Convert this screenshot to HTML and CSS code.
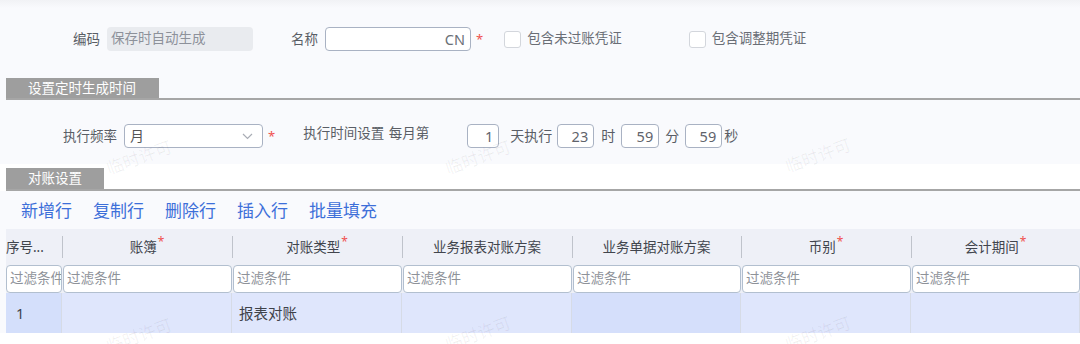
FILE: index.html
```html
<!DOCTYPE html>
<html lang="zh-CN">
<head>
<meta charset="utf-8">
<link rel="stylesheet" href="styles.css">
</head>
<body>
<div class="topband"></div>
<div class="row row1">
  <span class="lbl">编码</span>
  <div class="inp inp-disabled">保存时自动生成</div>
  <span class="lbl lbl-name">名称</span>
  <div class="inp inp-name">CN</div><span class="req">*</span>
  <div class="chk chk1"><span class="box"></span><span>包含未过账凭证</span></div>
  <div class="chk chk2"><span class="box"></span><span>包含调整期凭证</span></div>
</div>

<div class="sec sec1"><div class="tab tab1">设置定时生成时间</div></div>

<div class="row row2">
  <span class="lbl lbl-freq">执行频率</span>
  <div class="inp sel"><span>月</span>
    <svg class="chev" width="11" height="7" viewBox="0 0 11 7"><polyline points="1,1 5.5,5.5 10,1" fill="none" stroke="#a9adb5" stroke-width="1.2"/></svg>
  </div>
  <span class="req">*</span>
  <span class="lbl lbl-time">执行时间设置 每月第</span>
  <div class="inp num num-day">1</div>
  <span class="unit u-day">天执行</span>
  <div class="inp num num-h">23</div>
  <span class="unit u-h">时</span>
  <div class="inp num num-m">59</div>
  <span class="unit u-m">分</span>
  <div class="inp num num-s">59</div>
  <span class="unit u-s">秒</span>
</div>

<div class="sec2wrap"><div class="sec sec2"><div class="tab tab2">对账设置</div></div></div>

<div class="toolbar">
  <span class="act">新增行</span>
  <span class="act">复制行</span>
  <span class="act">删除行</span>
  <span class="act">插入行</span>
  <span class="act">批量填充</span>
</div>

<div class="grid">
  <div class="hd hd-first">序号...</div>
  <div class="hd">账簿<sup class="star">*</sup></div>
  <div class="hd">对账类型<sup class="star">*</sup></div>
  <div class="hd">业务报表对账方案</div>
  <div class="hd">业务单据对账方案</div>
  <div class="hd">币别<sup class="star">*</sup></div>
  <div class="hd">会计期间<sup class="star">*</sup></div>

  <div class="ft"><div class="fi">过滤条件</div></div>
  <div class="ft"><div class="fi">过滤条件</div></div>
  <div class="ft"><div class="fi">过滤条件</div></div>
  <div class="ft"><div class="fi">过滤条件</div></div>
  <div class="ft"><div class="fi">过滤条件</div></div>
  <div class="ft"><div class="fi">过滤条件</div></div>
  <div class="ft"><div class="fi">过滤条件</div></div>

  <div class="td td-idx">1</div>
  <div class="td"></div>
  <div class="td">报表对账</div>
  <div class="td"></div>
  <div class="td td-dark"></div>
  <div class="td"></div>
  <div class="td"></div>
</div>
<div class="tail"></div>

<span class="wm wm1">临时许可</span>
<span class="wm wm2">临时许可</span>
<span class="wm wm3">临时许可</span>
<span class="wm wm4">临时许可</span>
<span class="wm wm5">临时许可</span>
<span class="wm wm6">临时许可</span>
</body>
</html>
```

FILE: styles.css
```css
html, body {
  margin: 0;
  padding: 0;
}
body {
  width: 1080px;
  height: 344px;
  overflow: hidden;
  position: relative;
  background: #f9fafd;
  font-family: "Noto Sans", "Noto Sans CJK SC", sans-serif;
  font-size: 13.5px;
  color: #5a5e66;
  line-height: 1;
}
.topband {
  height: 8px;
  background: linear-gradient(#f1f2f5, #f9fafd);
}
.row {
  display: flex;
  align-items: center;
  height: 24px;
}
.row1 {
  margin-top: 19px;
  padding-left: 73px;
}
.lbl {
  white-space: nowrap;
  line-height: 18px;
}
.inp {
  box-sizing: border-box;
  height: 24px;
  border-radius: 4px;
  display: flex;
  align-items: center;
  white-space: nowrap;
}
.inp-disabled {
  margin-left: 7px;
  width: 146px;
  background: #e9ebef;
  color: #8d919a;
  padding-left: 4px;
}
.lbl-name {
  margin-left: 38px;
}
.inp-name {
  margin-left: 7px;
  width: 146px;
  background: #fff;
  border: 1px solid #a9b2c3;
  justify-content: flex-end;
  padding-right: 5px;
  font-size: 14.5px;
  color: #6b6f77;
}
.req {
  color: #f0514f;
  font-size: 13px;
  margin-left: 5px;
  line-height: 14px;
  align-self: center;
}
.chk {
  display: flex;
  align-items: center;
  white-space: nowrap;
  color: #6a6e76;
}
.chk .box {
  box-sizing: border-box;
  width: 17px;
  height: 17px;
  border: 1px solid #d3d6dc;
  border-radius: 3px;
  background: #fff;
  margin-right: 6px;
}
.chk1 {
  margin-left: 21px;
}
.chk2 {
  margin-left: 67px;
}

.sec {
  display: flex;
  margin-left: 6px;
  border-bottom: 2px solid #a6a6a6;
}
.sec1 {
  margin-top: 27px;
}
.tab {
  box-sizing: border-box;
  background: #9e9e9e;
  color: #fff;
  padding-left: 22px;
  white-space: nowrap;
}
.tab1 {
  width: 153px;
  height: 20px;
  line-height: 20px;
}
.tab2 {
  width: 98px;
  height: 21px;
  line-height: 21px;
}

.row2 {
  margin-top: 24px;
  padding-left: 63px;
}
.sel {
  margin-left: 7px;
  width: 139px;
  background: #fff;
  border: 1px solid #a9b2c3;
  padding-left: 5px;
  padding-right: 9px;
  justify-content: space-between;
  font-size: 14px;
  color: #555;
}
.chev {
  display: block;
}
.row2 .req {
  margin-left: 5px;
}
.lbl-time {
  margin-left: 28px;
  align-self: flex-start;
  word-spacing: 1px;
}
.num {
  background: #fff;
  border: 1px solid #a9b2c3;
  justify-content: flex-end;
  padding-right: 5px;
  font-size: 14.5px;
  color: #5f636b;
}
.num-day { margin-left: 38px; width: 32px; }
.num-h { margin-left: 5px; width: 37px; }
.num-m { margin-left: 6px; width: 38px; }
.num-s { margin-left: 6px; width: 37px; }
.unit {
  white-space: nowrap;
  font-size: 14px;
  color: #5a5e66;
}
.u-day { margin-left: 11px; }
.u-h { margin-left: 7px; }
.u-m { margin-left: 6px; }
.u-s { margin-left: 2px; }

.sec2wrap {
  margin-top: 16px;
  padding-top: 4px;
  background: #fff;
}

.toolbar {
  display: flex;
  align-items: center;
  gap: 21px;
  height: 38px;
  padding-left: 21px;
}
.act {
  font-size: 17px;
  color: #3d6fd9;
  white-space: nowrap;
}

.grid {
  margin-left: 6px;
  display: grid;
  grid-template-columns: 56px 170px 170px 170px 169px 170px 1fr;
  grid-template-rows: 35px 29px 40px;
}
.hd {
  position: relative;
  background: #eef0f7;
  display: flex;
  align-items: center;
  justify-content: center;
  color: #41454d;
  white-space: nowrap;
  padding-top: 2px;
  box-sizing: border-box;
}
.hd + .hd::before {
  content: "";
  position: absolute;
  left: 0;
  top: 7px;
  height: 22px;
  border-left: 1px solid #bfc3cb;
}
.hd-first {
  justify-content: flex-start;
  overflow: hidden;
}
.star {
  color: #f0514f;
  font-size: 12px;
  align-self: flex-start;
  margin-top: 5px;
  margin-left: 1px;
  line-height: 12px;
}
.ft {
  background: #eef0f7;
  padding: 1px 0 0 1px;
  box-sizing: border-box;
}
.ft:first-child, .ft:nth-child(8) {
  padding-left: 0;
}
.fi {
  box-sizing: border-box;
  height: 28px;
  background: #fff;
  border: 1px solid #b2bfcf;
  border-radius: 4px;
  display: flex;
  align-items: center;
  padding-left: 3px;
  color: #8e9299;
  white-space: nowrap;
  overflow: hidden;
}
.td {
  background: #dfe6fc;
  border-right: 1px solid #d6dbe6;
  display: flex;
  align-items: center;
  padding-left: 7px;
  font-size: 14.5px;
  color: #3e4249;
}
.td-idx {
  background: #d4dffb;
  padding-left: 10px;
}
.td-dark {
  background: #d5dffb;
}
.tail {
  height: 11px;
  background: #fff;
}

.wm {
  position: absolute;
  font-size: 17px;
  color: rgba(0, 0, 0, 0.06);
  transform: rotate(-20deg);
  transform-origin: left bottom;
  white-space: nowrap;
  pointer-events: none;
}
.wm1 { left: 110px; top: 160px; }
.wm2 { left: 449px; top: 160px; }
.wm3 { left: 789px; top: 158px; }
.wm4 { left: 110px; top: 338px; }
.wm5 { left: 449px; top: 336px; }
.wm6 { left: 789px; top: 336px; }
```
